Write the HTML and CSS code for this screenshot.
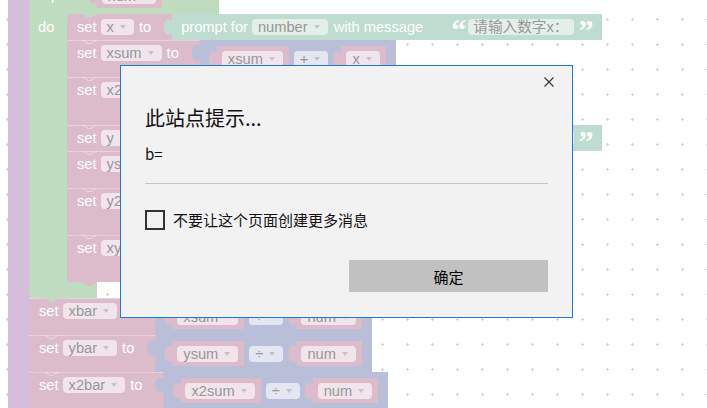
FILE: index.html
```html
<!DOCTYPE html>
<html lang="zh-CN">
<head>
<meta charset="utf-8">
<title>Blockly</title>
<link rel="stylesheet" href="styles.css">
</head>
<body>
<div class="ws">
  <div class="proc">
    <div class="proc-arm"></div>
    <div class="proc-body">
      <div class="loop">
        <div class="loop-head">
          <span class="lbl lbl-repeat">repeat</span>
          <div class="vb var"><span class="f dd">num</span></div>
          <span class="lbl lbl-times">times</span>
        </div>
        <div class="loop-mid">
          <div class="loop-arm"><span class="lbl">do</span></div>
          <div class="stack">
            <div class="set first">
              <div class="set-h"><span class="lbl">set</span><span class="f dd">x</span><span class="lbl">to</span></div>
              <div class="vb txt prompt">
                <span class="lbl">prompt for</span>
                <span class="f dd">number</span>
                <span class="lbl">with message</span>
                <div class="vb txt str"><span class="q">“</span><span class="f plain">请输入数字x：</span><span class="q q-close">”</span></div>
              </div>
            </div>
            <div class="set">
              <div class="set-h"><span class="lbl">set</span><span class="f dd">xsum</span><span class="lbl">to</span></div>
              <div class="vb math">
                <div class="vb var"><span class="f dd">xsum</span></div>
                <span class="f dd op">+</span>
                <div class="vb var"><span class="f dd">x</span></div>
              </div>
            </div>
            <div class="set">
              <div class="set-h"><span class="lbl">set</span><span class="f dd">x2sum</span><span class="lbl">to</span></div>
              <div class="vb math deep tall">
                <div class="vb var"><span class="f dd">x2sum</span></div>
                <span class="f dd op">+</span>
                <div class="vb math">
                  <div class="vb var"><span class="f dd">x</span></div>
                  <span class="f dd op">×</span>
                  <div class="vb var"><span class="f dd">x</span></div>
                </div>
              </div>
            </div>
            <div class="set">
              <div class="set-h"><span class="lbl">set</span><span class="f dd">y</span><span class="lbl">to</span></div>
              <div class="vb txt prompt">
                <span class="lbl">prompt for</span>
                <span class="f dd">number</span>
                <span class="lbl">with message</span>
                <div class="vb txt str"><span class="q">“</span><span class="f plain">请输入数字y：</span><span class="q q-close">”</span></div>
              </div>
            </div>
            <div class="set">
              <div class="set-h"><span class="lbl">set</span><span class="f dd">ysum</span><span class="lbl">to</span></div>
              <div class="vb math">
                <div class="vb var"><span class="f dd">ysum</span></div>
                <span class="f dd op">+</span>
                <div class="vb var"><span class="f dd">y</span></div>
              </div>
            </div>
            <div class="set">
              <div class="set-h"><span class="lbl">set</span><span class="f dd">y2sum</span><span class="lbl">to</span></div>
              <div class="vb math deep">
                <div class="vb var"><span class="f dd">y2sum</span></div>
                <span class="f dd op">+</span>
                <div class="vb math">
                  <div class="vb var"><span class="f dd">y</span></div>
                  <span class="f dd op">×</span>
                  <div class="vb var"><span class="f dd">y</span></div>
                </div>
              </div>
            </div>
            <div class="set">
              <div class="set-h"><span class="lbl">set</span><span class="f dd">xysum</span><span class="lbl">to</span></div>
              <div class="vb math deep">
                <div class="vb var"><span class="f dd">xysum</span></div>
                <span class="f dd op">+</span>
                <div class="vb math">
                  <div class="vb var"><span class="f dd">x</span></div>
                  <span class="f dd op">×</span>
                  <div class="vb var"><span class="f dd">y</span></div>
                </div>
              </div>
            </div>
          </div>
        </div>
        <div class="loop-foot"></div>
      </div>
      <div class="set after-loop">
        <div class="set-h"><span class="lbl">set</span><span class="f dd">xbar</span><span class="lbl">to</span></div>
        <div class="vb math">
          <div class="vb var"><span class="f dd">xsum</span></div>
          <span class="f dd op">÷</span>
          <div class="vb var"><span class="f dd">num</span></div>
        </div>
      </div>
      <div class="set">
        <div class="set-h"><span class="lbl">set</span><span class="f dd">ybar</span><span class="lbl">to</span></div>
        <div class="vb math">
          <div class="vb var"><span class="f dd">ysum</span></div>
          <span class="f dd op">÷</span>
          <div class="vb var"><span class="f dd">num</span></div>
        </div>
      </div>
      <div class="set">
        <div class="set-h"><span class="lbl">set</span><span class="f dd">x2bar</span><span class="lbl">to</span></div>
        <div class="vb math">
          <div class="vb var"><span class="f dd">x2sum</span></div>
          <span class="f dd op">÷</span>
          <div class="vb var"><span class="f dd">num</span></div>
        </div>
      </div>
    </div>
  </div>

  <div class="dlg" role="dialog">
    <div class="dlg-top">
      <svg class="dlg-x" width="10" height="10" viewBox="0 0 10 10" aria-label="关闭"><path d="M0.5 0.5 L9.5 9.5 M9.5 0.5 L0.5 9.5" stroke="#333" stroke-width="1.1" fill="none"/></svg>
    </div>
    <div class="dlg-title">此站点提示...</div>
    <div class="dlg-msg">b=</div>
    <div class="dlg-rule"></div>
    <label class="dlg-check"><span class="box"></span>不要让这个页面创建更多消息</label>
    <div class="dlg-actions"><button class="btn" type="button">确定</button></div>
  </div>
</div>
</body>
</html>
```

FILE: styles.css
```css
html, body {
  margin: 0;
  padding: 0;
  background: #fff;
}

.ws {
  position: relative;
  width: 707px;
  height: 408px;
  overflow: hidden;
  background-color: #fff;
  background-image:
    conic-gradient(at 3px 1px, transparent 75%, #d2d2d2 0),
    conic-gradient(at 1px 3px, transparent 75%, #d2d2d2 0);
  background-size: 25px 25px, 25px 25px;
  background-position: 6px 19px, 7px 18px;
  font-family: "Liberation Sans", "Noto Sans CJK SC", sans-serif;
  font-size: 14.667px;
}

/* ---------- procedure block ---------- */
.proc {
  display: flex;
  align-items: stretch;
  margin-left: 8px;
  margin-top: -23px;
  min-height: 460px;
}

.proc-arm {
  width: 21px;
  flex: none;
  background: #d5bedc;
}

.proc-body {
  display: flex;
  flex-direction: column;
  align-items: flex-start;
}

/* ---------- generic block parts ---------- */
.lbl {
  color: #fff;
  line-height: 16px;
  white-space: nowrap;
}

.f {
  display: inline-flex;
  align-items: center;
  box-sizing: border-box;
  height: 16px;
  line-height: 16px;
  padding: 0 8px 0 6px;
  border-radius: 4px;
  background: #f1e5eb;
  color: #979797;
  white-space: nowrap;
  overflow: hidden;
}

.f.dd::after {
  content: "";
  width: 0;
  height: 0;
  margin-left: 6px;
  border-left: 3px solid transparent;
  border-right: 3px solid transparent;
  border-top: 4px solid rgba(0, 0, 0, 0.16);
}

.f.plain {
  padding: 0 5px;
}

.vb {
  display: flex;
  align-items: baseline;
  flex: none;
  box-sizing: border-box;
  clip-path: polygon(8px 0, 100% 0, 100% 100%, 8px 100%, 8px 20px, 3px 21px, 0 17px, 0 9px, 3px 5px, 8px 6px);
}

.var {
  height: 25px;
  background: #dcbccb;
  padding: 5px 6px 4px 13px;
}

.math {
  height: 37px;
  background: #b9bfd9;
  padding: 6px 10px 6px 17px;
}

.math.deep {
  height: 47px;
  padding-top: 5px;
  padding-bottom: 5px;
}

.math.tall {
  height: 48px;
  padding-top: 6px;
}

.math > .f {
  background: #e4e7f1;
}

.math > .op {
  margin: 0 5px;
}

.prompt {
  height: 26px;
  background: #bedcd0;
  padding: 0 0 0 17px;
}

.prompt > .lbl:first-child {
  margin-right: 4px;
}

.prompt > .f {
  margin-right: 6px;
}

.str {
  height: 26px;
  background: #bedcd0;
  padding: 5px 11px 5px 18px;
  margin-left: 10px;
}

.txt .f {
  background: #e3efe9;
}

.q {
  align-self: flex-start;
  width: 12px;
  height: 16px;
  margin-right: 5px;
  margin-top: -2px;
  color: #fff;
  font-family: "Liberation Serif", serif;
  font-weight: bold;
  font-size: 30px;
  line-height: 26px;
  overflow: visible;
}

.q.q-close {
  margin-right: 0;
  margin-left: 5px;
}

/* ---------- set statement ---------- */
.set {
  position: relative;
  display: flex;
  align-items: flex-start;
  background: #dcbccb;
  box-shadow: inset 0 1px 0 rgba(255, 255, 255, 0.32);
}

.set::before {
  content: "";
  position: absolute;
  left: 15px;
  top: 0;
  width: 15px;
  height: 5px;
  background: rgba(255, 255, 255, 0.38);
  clip-path: polygon(0 0, 6px 4px, 9px 4px, 15px 0, 13.4px 0, 8.6px 3px, 6.4px 3px, 1.6px 0);
}

.set.first {
  box-shadow: none;
  border-top-left-radius: 5px;
}

.set.first::before,
.set.after-loop::before {
  background: #bfdcc0;
  clip-path: polygon(0 0, 6px 4px, 9px 4px, 15px 0);
}

.set-h {
  display: flex;
  align-items: flex-start;
  flex: none;
  padding: 5px 13px 0 10px;
}

.set-h > .lbl:first-child {
  margin-right: 4px;
}

.set-h > .f {
  margin-right: 5px;
}

/* ---------- repeat loop ---------- */
.loop {
  display: flex;
  flex-direction: column;
  align-items: flex-start;
}

.loop-head {
  display: flex;
  align-items: flex-start;
  box-sizing: border-box;
  height: 37px;
  padding: 6px 9px 0 9px;
  background: #bfdcc0;
}

.lbl-repeat {
  margin-top: 4px;
  margin-right: 9px;
}

.lbl-times {
  margin-top: 4px;
  margin-left: 13px;
}

.loop-mid {
  display: flex;
  align-items: stretch;
  background: linear-gradient(#bfdcc0, #bfdcc0) no-repeat;
  background-size: 48px 100%;
}

.loop-arm {
  width: 38px;
  flex: none;
  box-sizing: border-box;
  padding: 5px 0 0 9px;
  background: #bfdcc0;
}

.loop-arm .lbl {
  display: block;
}

.stack {
  display: flex;
  flex-direction: column;
  align-items: flex-start;
}

.loop-foot {
  position: relative;
  width: 68px;
  height: 16px;
  background: #bfdcc0;
}

.loop-foot::before {
  content: "";
  position: absolute;
  left: 53px;
  top: 0;
  width: 15px;
  height: 4px;
  background: #dcbccb;
  clip-path: polygon(0 0, 6px 4px, 9px 4px, 15px 0);
}

/* ---------- alert dialog ---------- */
.dlg {
  position: absolute;
  left: 120px;
  top: 65px;
  width: 453px;
  height: 253px;
  box-sizing: border-box;
  border: 1px solid #1a7ad6;
  background: #f2f2f2;
  padding: 0 24px;
  display: flex;
  flex-direction: column;
  font-family: "Noto Sans CJK SC", sans-serif;
  color: #000;
}

.dlg-top {
  display: flex;
  justify-content: flex-end;
  padding-top: 11px;
  margin-right: -6px;
}

.dlg-x {
  display: block;
}

.dlg-title {
  margin-top: 17px;
  font-size: 20px;
  line-height: 28px;
  color: #111;
}

.dlg-msg {
  margin-top: 12px;
  font-size: 15px;
  line-height: 20px;
  color: #111;
}

.dlg-rule {
  margin-top: 19px;
  height: 1px;
  background: #c4c4c4;
}

.dlg-check {
  display: flex;
  align-items: center;
  gap: 8px;
  margin-top: 26px;
  font-size: 15px;
  line-height: 20px;
  color: #111;
}

.dlg-check .box {
  width: 20px;
  height: 20px;
  box-sizing: border-box;
  border: 2px solid #333;
  flex: none;
}

.dlg-actions {
  display: flex;
  justify-content: flex-end;
  margin-top: 30px;
}

.btn {
  width: 199px;
  height: 32px;
  border: 0;
  padding: 0;
  background: #c1c1c1;
  font-family: "Noto Sans CJK SC", sans-serif;
  font-size: 15px;
  color: #000;
}
```
